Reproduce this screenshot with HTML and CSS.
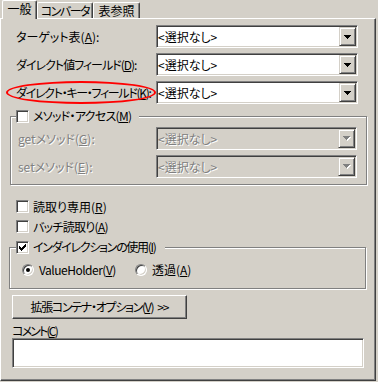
FILE: index.html
```html
<!DOCTYPE html>
<html lang="ja">
<head>
    <meta charset="UTF-8">
    <meta name="viewport" content="width=device-width, initial-scale=1.0">
    <title>一般</title>
    <link rel="stylesheet" href="styles.css">
</head>
<body>
    <div class="tabs">
        <div class="tab active">一般</div>
        <div class="tab tab-conv ls15">コンバータ</div>
        <div class="tab tab-ref">表参照</div>
    </div>
    <div class="panel">
        <div class="row">
            <span class="lbl">ターゲット表(<u>A</u>):</span>
            <div class="combo">
                <span class="combo-text">&lt;選択なし&gt;</span>
                <span class="drop"><svg width="7" height="4" viewBox="0 0 7 4"><path d="M0 0h7v1h-1v1h-1v1h-1v1h-1v-1h-1v-1h-1v-1h-1z"/></svg></span>
            </div>
        </div>
        <div class="row">
            <span class="lbl ls1">ダイレクト値フィールド(<u>D</u>):</span>
            <div class="combo">
                <span class="combo-text">&lt;選択なし&gt;</span>
                <span class="drop"><svg width="7" height="4" viewBox="0 0 7 4"><path d="M0 0h7v1h-1v1h-1v1h-1v1h-1v-1h-1v-1h-1v-1h-1z"/></svg></span>
            </div>
        </div>
        <div class="row">
            <span class="lbl marked ls13">ダイレクト・キー・フィールド(<u>K</u>):</span>
            <div class="combo">
                <span class="combo-text">&lt;選択なし&gt;</span>
                <span class="drop"><svg width="7" height="4" viewBox="0 0 7 4"><path d="M0 0h7v1h-1v1h-1v1h-1v1h-1v-1h-1v-1h-1v-1h-1z"/></svg></span>
            </div>
        </div>

        <fieldset class="group group-method">
            <legend><span class="check"></span><span class="ls07">メソッド・アクセス(<u>M</u>)</span></legend>
            <div class="row inner dis">
                <span class="lbl">getメソッド(<u>G</u>):</span>
                <div class="combo">
                    <span class="combo-text">&lt;選択なし&gt;</span>
                    <span class="drop"><svg width="8" height="5" viewBox="0 0 8 5"><path class="sh" d="M1 1h7v1h-1v1h-1v1h-1v1h-1v-1h-1v-1h-1v-1h-1z"/><path class="fg" d="M0 0h7v1h-1v1h-1v1h-1v1h-1v-1h-1v-1h-1v-1h-1z"/></svg></span>
                </div>
            </div>
            <div class="row inner dis">
                <span class="lbl">setメソッド(<u>E</u>):</span>
                <div class="combo">
                    <span class="combo-text">&lt;選択なし&gt;</span>
                    <span class="drop"><svg width="8" height="5" viewBox="0 0 8 5"><path class="sh" d="M1 1h7v1h-1v1h-1v1h-1v1h-1v-1h-1v-1h-1v-1h-1z"/><path class="fg" d="M0 0h7v1h-1v1h-1v1h-1v1h-1v-1h-1v-1h-1v-1h-1z"/></svg></span>
                </div>
            </div>
        </fieldset>

        <div class="check-row first-check"><span class="check"></span><span>読取り専用(<u>R</u>)</span></div>
        <div class="check-row"><span class="check"></span><span class="ls07">バッチ読取り(<u>A</u>)</span></div>

        <fieldset class="group group-indirect">
            <legend><span class="check"><svg width="11" height="11" viewBox="0 0 11 11"><path d="M2 4h1v3h-1zM3 5h1v3h-1zM4 6h1v3h-1zM5 5h1v3h-1zM6 4h1v3h-1zM7 3h1v3h-1zM8 2h1v3h-1z"/></svg></span><span class="ls13">インダイレクションの使用(<u>I</u>)</span></legend>
            <div class="radio-row">
                <span class="radio-item first-radio"><span class="radio on"><span class="dot"></span></span><span class="ls05">ValueHolder(<u>V</u>)</span></span>
                <span class="radio-item"><span class="radio"></span><span>透過(<u>A</u>)</span></span>
            </div>
        </fieldset>

        <div class="btn"><span class="ls13">拡張コンテナ・オプション(<u>V</u>)</span><span class="gt">&gt;&gt;</span></div>
        <div class="memo-label"><span class="ls18">コメント(<u>C</u>)</span></div>
        <div class="memo"></div>
    </div>
</body>
</html>
```

FILE: styles.css
```css
body {
    margin: 0;
    width: 378px;
    height: 382px;
    overflow: hidden;
    background: #d4d0c8;
    color: #000;
    font-family: "Noto Sans CJK JP", "Noto Sans", sans-serif;
    font-size: 12px;
    line-height: 14px;
    font-feature-settings: "palt" 1;
}
u {
    text-underline-offset: 1px;
}
svg {
    display: block;
    shape-rendering: crispEdges;
}

/* squeeze the kana so widths follow the bitmap UI font */
.ls05 { letter-spacing: -0.5px; }
.ls07 { letter-spacing: -0.7px; }
.ls1 { letter-spacing: -1px; }
.ls13 { letter-spacing: -1.3px; }
.ls15 { letter-spacing: -1.5px; }
.ls18 { letter-spacing: -1.8px; }

/* tabs */
.tabs {
    display: flex;
    align-items: flex-end;
    height: 18px;
    padding-left: 2px;
}
.tab {
    box-sizing: border-box;
    height: 16px;
    border-top: 1px solid #fff;
    border-left: 1px solid #fff;
    border-right: 1px solid #404040;
    box-shadow: inset -1px 0 #808080;
    border-radius: 2px 2px 0 0;
    text-align: center;
    line-height: 15px;
    white-space: nowrap;
}
.tab.active {
    position: relative;
    z-index: 1;
    width: 35px;
    height: 19px;
    margin-bottom: -1px;
    background: #d4d0c8;
    line-height: 16px;
}
.tab-conv {
    width: 56px;
}
.tab-ref {
    width: 47px;
}

/* panel */
.panel {
    box-sizing: border-box;
    width: 376px;
    height: 363px;
    padding-top: 6px;
    border-top: 1px solid #fff;
    border-left: 1px solid #fff;
    border-right: 1px solid #404040;
    border-bottom: 1px solid #404040;
    box-shadow: inset -1px -1px #808080;
}
.row {
    display: flex;
    align-items: center;
    height: 23px;
    margin: 0 0 5px 15px;
}
.lbl {
    width: 140px;
    flex: none;
    white-space: nowrap;
}
.marked {
    position: relative;
}
.marked::after {
    content: "";
    position: absolute;
    left: -10px;
    right: 0;
    top: -5px;
    bottom: -4px;
    border: 2.5px solid #f00;
    border-radius: 50%;
}

/* combo box */
.combo {
    box-sizing: border-box;
    display: flex;
    align-items: center;
    width: 202px;
    height: 23px;
    padding: 1px;
    background: #fff;
    border: 1px solid;
    border-color: #808080 #fff #fff #808080;
    box-shadow: inset 1px 1px #404040, inset -1px -1px #d4d0c8;
}
.combo-text {
    flex: 1;
    white-space: nowrap;
}
.drop {
    box-sizing: border-box;
    display: flex;
    align-items: center;
    justify-content: center;
    width: 17px;
    height: 19px;
    background: #d4d0c8;
    border: 1px solid;
    border-color: #d4d0c8 #404040 #404040 #d4d0c8;
    box-shadow: inset 1px 1px #fff, inset -1px -1px #808080;
}
.dis .lbl,
.dis .combo-text {
    color: #808080;
    text-shadow: 1px 1px #fff;
}
.dis .combo {
    background: #d4d0c8;
}
.dis .drop .sh {
    fill: #fff;
}
.dis .drop .fg {
    fill: #808080;
}

/* group boxes */
.group {
    box-sizing: border-box;
    min-width: 0;
    width: 357px;
    border: 1px solid #808080;
    box-shadow: 1px 1px #fff, inset 1px 1px #fff;
}
.group legend {
    display: flex;
    align-items: center;
    gap: 4px;
    height: 14px;
    background: #d4d0c8;
    white-space: nowrap;
}
.group-method {
    margin: 5px 0 0 9px;
    padding: 4px 9px 6px 7px;
}
.group-method legend {
    margin-left: -2px;
    padding: 0 8px 0 0;
}
.row.inner {
    margin-left: 0;
}
.row.inner:last-child {
    margin-bottom: 0;
}
.inner .lbl {
    width: 138px;
}
.inner .combo {
    width: 201px;
}
.group-indirect {
    margin: 0 0 0 8px;
    padding: 8px 9px 10px 12px;
}
.group-indirect legend {
    margin-left: -6px;
    padding: 0 9px 0 0;
}

/* checkboxes and radios */
.check {
    box-sizing: border-box;
    flex: none;
    width: 13px;
    height: 13px;
    background: #fff;
    border: 1px solid;
    border-color: #808080 #fff #fff #808080;
    box-shadow: inset 1px 1px #404040, inset -1px -1px #d4d0c8;
}
.check-row {
    display: flex;
    align-items: center;
    gap: 4px;
    height: 13px;
    margin: 0 0 7px 15px;
    white-space: nowrap;
}
.first-check {
    margin-top: 15px;
}
.radio-row {
    display: flex;
    align-items: center;
    height: 16px;
}
.radio-item {
    display: flex;
    align-items: center;
    gap: 5px;
    white-space: nowrap;
}
.first-radio {
    width: 113px;
}
.radio {
    box-sizing: border-box;
    flex: none;
    display: flex;
    align-items: center;
    justify-content: center;
    width: 12px;
    height: 12px;
    border-radius: 50%;
    background: #fff;
    border: 1px solid;
    border-color: #808080 #fff #fff #808080;
    box-shadow: inset 1px 1px #404040, inset -1px -1px #d4d0c8;
}
.dot {
    width: 4px;
    height: 4px;
    border-radius: 50%;
    background: #000;
}

/* bottom */
.btn {
    box-sizing: border-box;
    display: flex;
    align-items: center;
    justify-content: center;
    gap: 4px;
    width: 175px;
    height: 24px;
    margin: 6px 0 0 11px;
    border: 1px solid;
    border-color: #fff #404040 #404040 #fff;
    box-shadow: inset -1px -1px #808080;
    white-space: nowrap;
}
.gt {
    letter-spacing: -1px;
}
.memo-label {
    margin: 5px 0 0 11px;
}
.memo {
    box-sizing: border-box;
    width: 352px;
    height: 30px;
    margin-left: 11px;
    background: #fff;
    border: 1px solid;
    border-color: #808080 #fff #fff #808080;
    box-shadow: inset 1px 1px #404040, inset -1px -1px #d4d0c8;
}
```
